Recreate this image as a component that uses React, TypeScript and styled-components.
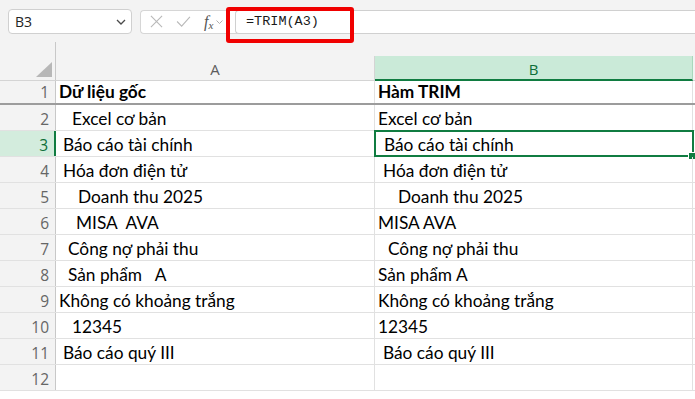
import styled, { createGlobalStyle } from "styled-components";

const GREEN = "#107c41";
const GRID = "#e1e1e1";
const HEAD_BG = "#f3f3f3";

interface RowData {
  a: string;
  b: string;
  aIndent?: number;
  bIndent?: number;
  bold?: boolean;
}

const rows: RowData[] = [
  { a: "Dữ liệu gốc", b: "Hàm TRIM", bold: true },
  { a: "Excel cơ bản", b: "Excel cơ bản", aIndent: 13 },
  { a: "Báo cáo tài chính", b: "Báo cáo tài chính", aIndent: 4, bIndent: 6 },
  { a: "Hóa đơn điện tử", b: "Hóa đơn điện tử", aIndent: 4, bIndent: 5 },
  { a: "Doanh thu 2025", b: "Doanh thu 2025", aIndent: 19, bIndent: 20 },
  { a: "MISA  AVA", b: "MISA AVA", aIndent: 17 },
  { a: "Công nợ phải thu", b: "Công nợ phải thu", aIndent: 9, bIndent: 10 },
  { a: "Sản phẩm   A", b: "Sản phẩm A", aIndent: 9 },
  { a: "Không có khoảng trắng", b: "Không có khoảng trắng" },
  { a: "12345", b: "12345", aIndent: 13 },
  { a: "Báo cáo quý III", b: "Báo cáo quý III", aIndent: 4, bIndent: 5 },
  { a: "", b: "" },
];

const SELECTED_ROW = 3;

export default function App() {
  return (
    <>
      <GlobalStyle />
      <Sheet>
        <TopBar>
          <NameBox>
            <span>B3</span>
            <Chevron width="10" height="6" viewBox="0 0 10 6">
              <path d="M1 1l4 4 4-4" />
            </Chevron>
          </NameBox>
          <FormulaTools>
            <ToolIcon width="13" height="13" viewBox="0 0 14 14">
              <path d="M1 1l12 12M13 1L1 13" />
            </ToolIcon>
            <ToolIcon width="15" height="11" viewBox="0 0 16 12">
              <path d="M1 6l5 5L15 1" />
            </ToolIcon>
            <Fx>
              f<sub>x</sub>
            </Fx>
            <SmallChevron width="7" height="4" viewBox="0 0 7 4">
              <path d="M0.5 0.5l3 3 3-3" />
            </SmallChevron>
          </FormulaTools>
          <FormulaInput>
            <FormulaText>=TRIM(A3)</FormulaText>
            <Highlight />
          </FormulaInput>
        </TopBar>

        <HeaderRow>
          <Corner>
            <CornerTriangle />
          </Corner>
          <ColHeader>A</ColHeader>
          <ColHeader $active>B</ColHeader>
        </HeaderRow>

        {rows.map((row, i) => {
          const n = i + 1;
          return (
            <Row key={n} $first={n === 1}>
              <RowHeader $active={n === SELECTED_ROW}>{n}</RowHeader>
              <Cell $bold={row.bold} $indent={row.aIndent ?? 0}>
                {row.a}
              </Cell>
              <Cell
                $bold={row.bold}
                $indent={row.bIndent ?? 0}
                $selected={n === SELECTED_ROW}
              >
                {row.b}
                {n === SELECTED_ROW && <FillHandle />}
              </Cell>
            </Row>
          );
        })}
      </Sheet>
    </>
  );
}

const GlobalStyle = createGlobalStyle`
  html, body {
    margin: 0;
    padding: 0;
    background: #ffffff;
  }
  body {
    width: 695px;
    height: 399px;
    overflow: hidden;
  }
`;

const Sheet = styled.div`
  width: 695px;
  height: 399px;
  display: flex;
  flex-direction: column;
  background: #ffffff;
  font-family: Lato, "Noto Sans", sans-serif;
`;

const TopBar = styled.div`
  display: flex;
  align-items: center;
  gap: 8px;
  height: 42px;
  padding: 1px 0 0 8px;
  box-sizing: border-box;
  background: ${HEAD_BG};
`;

const NameBox = styled.div`
  display: flex;
  align-items: center;
  justify-content: space-between;
  width: 124px;
  height: 25px;
  box-sizing: border-box;
  padding: 0 5px 0 6px;
  background: #ffffff;
  border: 1px solid #d0d0d0;
  border-radius: 4px;
  font-family: "Open Sans", sans-serif;
  font-size: 14px;
  color: #242424;
`;

const Chevron = styled.svg`
  fill: none;
  stroke: #4a4a4a;
  stroke-width: 1.3;
`;

const FormulaTools = styled.div`
  display: flex;
  align-items: center;
  gap: 13px;
  width: 100px;
  height: 24px;
  box-sizing: border-box;
  padding-left: 9px;
  background: #ffffff;
  border: 1px solid #d6d6d6;
  border-right: none;
  border-radius: 4px 0 0 4px;
`;

const ToolIcon = styled.svg`
  fill: none;
  stroke: #b9b9b9;
  stroke-width: 1.2;
`;

const Fx = styled.span`
  margin-right: -10px;
  font-family: "Liberation Serif", serif;
  font-style: italic;
  font-size: 16px;
  color: #555555;

  sub {
    font-size: 11px;
    vertical-align: -2px;
  }
`;

const SmallChevron = styled.svg`
  fill: none;
  stroke: #b0b0b0;
  stroke-width: 1;
`;

const FormulaInput = styled.div`
  position: relative;
  flex: 1;
  display: flex;
  align-items: center;
  height: 24px;
  margin-left: -13px;
  padding-left: 10px;
  box-sizing: border-box;
  background: #ffffff;
  border-top: 1px solid #d0d0d0;
  border-bottom: 1px solid #d0d0d0;
  border-left: 1px solid #d0d0d0;
  border-radius: 4px 0 0 4px;
`;

const FormulaText = styled.span`
  font-family: "Liberation Mono", monospace;
  font-size: 13.5px;
  color: #1a1a1a;
`;

const Highlight = styled.div`
  position: absolute;
  left: -10px;
  top: -4px;
  width: 128px;
  height: 36px;
  box-sizing: border-box;
  border: 4px solid #f00000;
  border-radius: 3px;
  pointer-events: none;
`;

const HeaderRow = styled.div`
  display: grid;
  grid-template-columns: 56px 319px 318px 2px;
  height: 39px;
  background: ${HEAD_BG};
  box-sizing: border-box;
  border-bottom: 1px solid #d4d4d4;
`;

const Corner = styled.div`
  position: relative;
  border-right: 1px solid #c8c8c8;
`;

const CornerTriangle = styled.div`
  position: absolute;
  right: 3px;
  bottom: 3px;
  width: 16px;
  height: 15px;
  background: #b7b7b7;
  clip-path: polygon(100% 0, 100% 100%, 0 100%);
`;

const ColHeader = styled.div<{ $active?: boolean }>`
  align-self: end;
  display: flex;
  align-items: center;
  justify-content: center;
  height: 25px;
  box-sizing: border-box;
  margin-bottom: -1px;
  border-right: 1px solid ${(p) => (p.$active ? "#a9d8bc" : "#d4d4d4")};
  border-bottom: ${(p) => (p.$active ? `2px solid ${GREEN}` : "1px solid #d4d4d4")};
  background: ${(p) => (p.$active ? "#caead8" : HEAD_BG)};
  color: ${(p) => (p.$active ? "#0e6f39" : "#5c5c5c")};
  font-family: "Open Sans", sans-serif;
  font-size: 15px;
  padding-top: 2px;
`;

const Row = styled.div<{ $first?: boolean }>`
  display: grid;
  grid-template-columns: 56px 319px 318px 2px;
  height: ${(p) => (p.$first ? "24px" : "26px")};
  box-sizing: border-box;
  border-bottom: ${(p) => (p.$first ? "2px solid #9c9c9c" : `1px solid ${GRID}`)};
`;

const RowHeader = styled.div<{ $active?: boolean }>`
  display: flex;
  align-items: flex-end;
  justify-content: flex-end;
  padding: 0 6px 0 0;
  box-sizing: border-box;
  background: ${(p) => (p.$active ? "#d3ecdd" : HEAD_BG)};
  border-right: ${(p) => (p.$active ? `2px solid ${GREEN}` : "1px solid #c8c8c8")};
  color: ${(p) => (p.$active ? "#0e6f39" : "#666666")};
  font-family: "Open Sans", sans-serif;
  font-size: 15.5px;
  line-height: 22px;
`;

const Cell = styled.div<{ $bold?: boolean; $indent: number; $selected?: boolean }>`
  position: relative;
  display: flex;
  align-items: flex-end;
  padding: 0 0 0 ${(p) => 3 + p.$indent}px;
  box-sizing: border-box;
  border-right: 1px solid ${GRID};
  white-space: pre;
  font-size: 17.3px;
  line-height: 22px;
  font-weight: ${(p) => (p.$bold ? 700 : 400)};
  color: #000000;
  ${(p) =>
    p.$selected &&
    `
    outline: 2px solid ${GREEN};
    outline-offset: -1px;
  `}
`;

const FillHandle = styled.span`
  position: absolute;
  right: -4px;
  bottom: -4px;
  width: 6px;
  height: 6px;
  background: ${GREEN};
  border: 1px solid #ffffff;
`;
